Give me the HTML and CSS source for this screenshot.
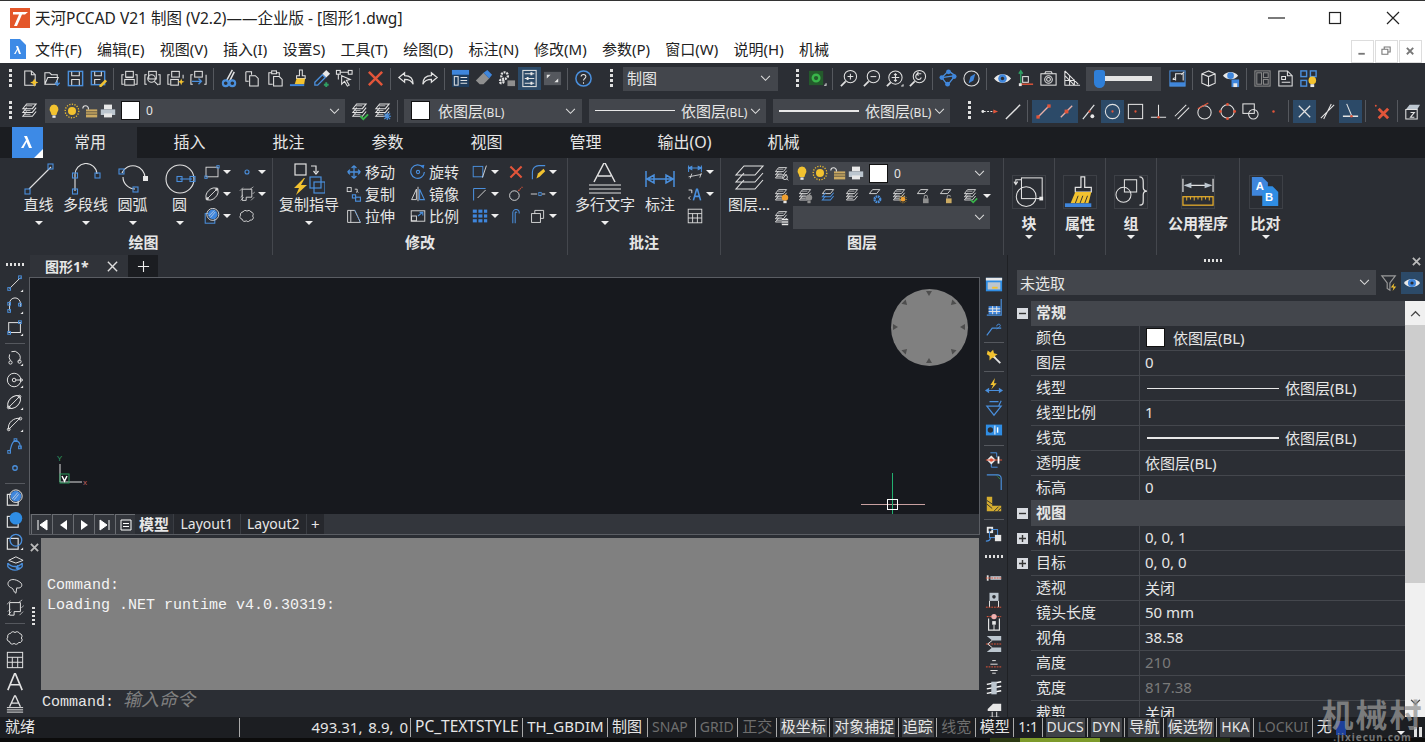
FILE: index.html
```html
<!DOCTYPE html>
<html lang="zh-CN">
<head>
  <meta charset="UTF-8" />
  <meta name="viewport" content="width=device-width, initial-scale=1.0"/>
  <title>天河PCCAD V21 制图</title>
  <link rel="stylesheet" href="styles.css">
</head>
<body>
  <!-- icon sprite -->
  <svg class="sprite" xmlns="http://www.w3.org/2000/svg">
    <symbol id="new" viewBox="0 0 20 20"><path d="M5 2h7l4 4v11H5z"/><path d="M12 2v4h4"/><path class="fy" d="M15 10l1.300 3 3 1.300-3 1.300-1.300 3-1.300-3-3-1.300 3-1.300z"/></symbol>
    <symbol id="open" viewBox="0 0 20 20"><path d="M2 16V4h5l2 2h6v3M2 16l3-7h11l-3 7z"/><path class="b" d="M15 12v5m-2.500-2.500l2.500 2.500 2.500-2.500" stroke-width="1.500"/></symbol>
    <symbol id="save" viewBox="0 0 20 20"><rect class="b" x="2.500" y="2.500" width="15" height="15" stroke-width="1.500"/><path d="M6 3v4h8V3M6 17v-6h8v6"/></symbol>
    <symbol id="saveas" viewBox="0 0 20 20"><rect class="b" x="2.500" y="2.500" width="14" height="14" stroke-width="1.500"/><path d="M6 3v4h7V3M6 16v-5h6"/><path class="fy" d="M11 17l6-6 2 2-6 6h-2z"/></symbol>
    <symbol id="plot" viewBox="0 0 20 20"><path d="M4 6H2v10h2M16 6h2v10h-2"/><rect x="6" y="2.500" width="8" height="6"/><rect x="5" y="11" width="10" height="6"/><path d="M6 9h8"/></symbol>
    <symbol id="plotview" viewBox="0 0 20 20"><path d="M4 6H2v10h2M16 6h2v10h-2"/><rect x="6" y="2.500" width="8" height="8"/><circle cx="9" cy="10" r="4"/><path d="M12 13l4 4"/></symbol>
    <symbol id="plotstar" viewBox="0 0 20 20"><path d="M4 6H2v10h2M18 6v4"/><rect x="6" y="2.500" width="8" height="6"/><rect x="5" y="11" width="8" height="6"/><path class="fy" d="M16 10l1 2.500 2.500 1-2.500 1-1 2.500-1-2.500-2.500-1 2.500-1z"/></symbol>
    <symbol id="plotgo" viewBox="0 0 20 20"><path d="M4 6H2v10h2M18 6v10h-2"/><rect x="6" y="2.500" width="8" height="6"/><path class="b" d="M3 13h10m-3-3l3 3-3 3" stroke-width="1.500"/></symbol>
    <symbol id="cut" viewBox="0 0 20 20"><path d="M13 1L7 12M15 3L10 13" stroke-width="1.600"/><circle class="b" cx="6" cy="15" r="3" stroke-width="2.200"/><circle class="b" cx="13" cy="15" r="3" stroke-width="2.200"/></symbol>
    <symbol id="copy" viewBox="0 0 20 20"><path d="M3 3h6v3M3 3v10h3"/><path d="M7 7h6l3 3v8H7z"/></symbol>
    <symbol id="paste" viewBox="0 0 20 20"><path d="M6 4H3v12h4M11 4h3v3"/><rect x="6" y="2" width="5" height="3"/><path d="M8 8h6l3 3v7H8z"/></symbol>
    <symbol id="brush" viewBox="0 0 20 20"><path d="M11 1h3v6h3v3H8V7h3z"/><path class="fy" d="M8 10h9l-1 6H6z"/><rect class="fb" x="1" y="16" width="15" height="2"/></symbol>
    <symbol id="dropper" viewBox="0 0 20 20"><path class="b" d="M3 14l8-8 3 3-8 8H3z" stroke-width="1.400"/><path class="fw" d="M11 5l4-4 4 4-4 4z"/><path class="g" d="M15 14v5M12.500 16.500h5" stroke-width="2"/></symbol>
    <symbol id="select" viewBox="0 0 20 20"><rect x="1.500" y="1.500" width="4" height="4"/><rect x="14" y="1.500" width="4" height="4"/><path d="M5 3.500h9M3.500 5v6"/><path d="M7 7l9 4-4 1 3 5-2 1-3-5-3 3z"/></symbol>
    <symbol id="x" viewBox="0 0 20 20"><path class="r" d="M3 3l14 14M17 3L3 17" stroke-width="2.600"/></symbol>
    <symbol id="undo" viewBox="0 0 20 20"><path d="M8 4L2 9l6 5v-3c4 0 7 1 9 5 0-6-3-9-9-9z" stroke-width="1.300"/></symbol>
    <symbol id="redo" viewBox="0 0 20 20"><path d="M12 4l6 5-6 5v-3c-4 0-7 1-9 5 0-6 3-9 9-9z" stroke-width="1.300"/></symbol>
    <symbol id="palette" viewBox="0 0 20 20"><rect class="fbd" x="1" y="1" width="18" height="18"/><rect class="fb" x="1" y="1" width="18" height="5"/><rect x="3.500" y="8" width="4" height="9"/><path d="M10 9h7M10 12h7M10 15h7"/></symbol>
    <symbol id="eraser" viewBox="0 0 20 20"><path class="fgr" d="M2 12l8-8 6 6-6 6H6z"/><path class="fb" d="M10 4l4-3 5 5-3 4z"/></symbol>
    <symbol id="gears" viewBox="0 0 20 20"><circle class="thick" cx="8" cy="7" r="3.500" stroke-dasharray="2 1"/><circle class="thick" cx="5" cy="13" r="2" stroke-dasharray="2 1"/><rect class="fgr" x="11" y="12" width="8" height="6"/></symbol>
    <symbol id="sliders" viewBox="0 0 20 20"><rect x="3" y="1.500" width="14" height="17"/><path d="M5 5h10M5 10h10M5 15h10"/><path class="fw" d="M11 3.500h2v3h-2zM7 8.500h2v3H7zM11 13.500h2v3h-2z"/></symbol>
    <symbol id="expand" viewBox="0 0 20 20"><rect class="fgd" x="1" y="3" width="18" height="14"/><path class="fw" d="M4 6h4l-4 4zM16 14h-4l4-4z"/></symbol>
    <symbol id="help" viewBox="0 0 20 20"><circle class="b" cx="10" cy="10" r="8" stroke-width="1.600"/><path d="M7.500 8c0-3 5-3 5 0 0 2-2.500 2-2.500 4M10 14v1.500"/></symbol>
    <symbol id="regen" viewBox="0 0 20 20"><rect class="fgn" x="1" y="2" width="15" height="15"/><circle class="g2" cx="8.500" cy="9.500" r="3.500" stroke-width="2.500"/><path d="M17 17h2v-2"/></symbol>
    <symbol id="zin" viewBox="0 0 20 20"><circle cx="12" cy="8" r="6.500"/><path d="M7 13l-5 5" stroke-width="1.800"/><path d="M12 5v6M9 8h6"/></symbol>
    <symbol id="zout" viewBox="0 0 20 20"><circle cx="12" cy="8" r="6.500"/><path d="M7 13l-5 5" stroke-width="1.800"/><path d="M9 8h6"/></symbol>
    <symbol id="zext" viewBox="0 0 20 20"><circle cx="11" cy="9" r="7"/><path d="M6 14l-4 4" stroke-width="1.800"/><path d="M11 5v8M7 9h8M9.500 6.500l1.500-1.500 1.500 1.500M9.500 11.500l1.500 1.500 1.500-1.500"/><path d="M17 18h2v-2"/></symbol>
    <symbol id="zprev" viewBox="0 0 20 20"><circle cx="12" cy="8" r="6.500"/><path d="M7 13l-5 5" stroke-width="1.800"/><path d="M14 5h-3a3 3 0 1 0 3 4M11 3l-1.500 2 1.500 2"/></symbol>
    <symbol id="orbit" viewBox="0 0 20 20"><path class="b" d="M10 2L3 9l6 8M10 2l7 5-8 10M3 9l14-2" stroke-width="1.400"/><circle class="fb" cx="10" cy="3" r="2.500"/><circle class="fb" cx="3" cy="9" r="2.500"/><circle class="fb" cx="16" cy="8" r="2.500"/><circle class="fb" cx="9" cy="16" r="2.500"/></symbol>
    <symbol id="compass" viewBox="0 0 20 20"><circle cx="10" cy="10" r="8"/><path class="fb" d="M14 5l-2 7-5 3 2-7z"/></symbol>
    <symbol id="eye" viewBox="0 0 20 20"><path class="fw" d="M1 10c4-6 14-6 18 0-4 6-14 6-18 0z"/><circle class="fb" cx="10" cy="10" r="4.500"/><circle class="fd" cx="10" cy="10" r="1.800"/></symbol>
    <symbol id="axes" viewBox="0 0 20 20"><path class="g" d="M5 17V3M3 5l2-3 2 3" stroke-width="1.500"/><path class="r" d="M5 16h13" stroke-width="1.500"/><rect x="7" y="8" width="6" height="6"/><rect class="fw" x="3" y="15" width="3" height="3"/></symbol>
    <symbol id="camera" viewBox="0 0 20 20"><rect x="2" y="5" width="16" height="12"/><path d="M6 5l1-2h6l1 2"/><circle cx="10" cy="11" r="4"/><circle cx="10" cy="11" r="2"/></symbol>
    <symbol id="persp" viewBox="0 0 20 20"><path d="M3 2v15h16M3 2l14 14M3 7l10 10M8 7v10M13 11v6M3 12h10"/></symbol>
    <symbol id="vport" viewBox="0 0 20 20"><rect class="fb" x="2" y="14" width="16" height="4"/><rect class="b" x="2" y="2" width="16" height="16"/><path d="M8 12V5h8v7"/><path d="M5 11h3M5 11l2-2M17 3l-3 3"/></symbol>
    <symbol id="cube" viewBox="0 0 20 20"><path d="M10 2L3 5v10l7 3 7-3V5zM3 5l7 3 7-3M10 8v10"/></symbol>
    <symbol id="eyesave" viewBox="0 0 20 20"><path class="fw" d="M1 7c4-5 12-5 16 0-4 5-12 5-16 0z"/><circle class="fb" cx="9" cy="7" r="3.500"/><rect class="fb" x="10" y="11" width="8" height="8"/><rect class="fw" x="12" y="15" width="4" height="4"/></symbol>
    <symbol id="lay1" viewBox="0 0 20 20"><g class="dim"><rect x="2" y="2" width="16" height="16"/><rect x="4" y="4" width="5" height="12"/><rect x="11" y="4" width="5" height="5"/><rect x="11" y="11" width="5" height="5"/></g></symbol>
    <symbol id="lay2" viewBox="0 0 20 20"><path d="M3 2h9l5 5v11H3z"/><path d="M12 2v5h5M6 14h9M6 8h4v3H6z"/></symbol>
    <symbol id="lay3" viewBox="0 0 20 20"><g class="b"><rect x="2" y="2" width="6" height="6" stroke-width="1.500"/><rect x="12" y="2" width="6" height="6" stroke-width="1.500"/><rect x="2" y="12" width="6" height="6" stroke-width="1.500"/></g><circle class="fy" cx="14" cy="12" r="4"/><rect class="fw" x="12" y="16" width="4" height="3"/></symbol>
    <symbol id="lay" viewBox="0 0 20 20"><path d="M7 2h10l-4 5H3zM7 6l-4 5h10l4-5M7 10l-4 5h10l4-5" stroke-width="1.100"/><path d="M6 4h7M5 9h6M5 13h6" stroke-width=".8"/></symbol>
    <symbol id="layfind" viewBox="0 0 20 20"><use href="#lay"/><circle cx="15" cy="14" r="3"/><path d="M17 16l2 2"/></symbol>
    <symbol id="layok" viewBox="0 0 20 20"><use href="#lay"/><path class="g2" d="M11 15l3 3 5-5" stroke-width="2"/></symbol>
    <symbol id="laystar" viewBox="0 0 20 20"><use href="#lay"/><path class="b" d="M15 11v8M11 15h8M12 12l6 6M18 12l-6 6" stroke-width="1.300"/></symbol>
    <symbol id="laybulb" viewBox="0 0 20 20"><use href="#lay"/><circle class="fo" cx="15" cy="12" r="4"/><rect class="fw" x="13" y="16" width="4" height="3"/></symbol>
    <symbol id="laygrey" viewBox="0 0 20 20"><use href="#lay"/><circle class="fgr" cx="15" cy="12" r="4"/><rect class="fgr" x="13" y="16" width="4" height="3"/></symbol>
    <symbol id="layblue" viewBox="0 0 20 20"><path d="M7 2h10l-4 5H3z"/><path class="b" d="M7 6l-4 5h10l4-5M7 10l-4 5h10l4-5" stroke-width="1.300"/></symbol>
    <symbol id="laygear" viewBox="0 0 20 20"><path d="M7 2h9l-4 5H3z"/><circle class="b" cx="13" cy="14" r="3.500" stroke-width="3" stroke-dasharray="2 .8"/></symbol>
    <symbol id="laysun" viewBox="0 0 20 20"><use href="#lay"/><circle class="fo" cx="15" cy="14" r="3"/><circle class="o" cx="15" cy="14" r="4.500" stroke-dasharray="1 1.500"/></symbol>
    <symbol id="laylock" viewBox="0 0 20 20"><path d="M7 2h9l-4 5H3z"/><rect class="fgr" x="10" y="13" width="7" height="6"/><path class="gr" d="M11.500 13v-2a2 2 0 0 1 4 0v2" stroke-width="1.300"/></symbol>
    <symbol id="layopen" viewBox="0 0 20 20"><path d="M7 2h9l-4 5H3z"/><rect class="ftan" x="10" y="13" width="7" height="6"/><path class="gr" d="M11.500 13v-2a2 2 0 0 1 4 0" stroke-width="1.300"/></symbol>
    <symbol id="laylist" viewBox="0 0 20 20"><use href="#lay"/><rect class="fw" x="11" y="11" width="8" height="8"/><path class="bd" d="M11 13.500h8M11 16.500h8" stroke-width="1.200"/></symbol>
    <symbol id="bulb" viewBox="0 0 20 20"><path class="fy" d="M10 2a6 6 0 0 1 4 10l-1 3H7l-1-3a6 6 0 0 1 4-10z"/><rect class="fw" x="8" y="15.500" width="4" height="3"/></symbol>
    <symbol id="sun" viewBox="0 0 20 20"><circle class="fy" cx="10" cy="10" r="5"/><circle class="y" cx="10" cy="10" r="8.500" stroke-dasharray="1.500 1.800" stroke-width="1.600"/></symbol>
    <symbol id="lockopen" viewBox="0 0 20 20"><rect class="ftan" x="5" y="8" width="14" height="10"/><path class="bd" d="M5 11h14M5 14h14" stroke-width=".8"/><path d="M1 7a3.500 3.500 0 0 1 7 0v1" stroke-width="1.400"/></symbol>
    <symbol id="printer" viewBox="0 0 20 20"><rect class="fw" x="5" y="2" width="10" height="6"/><rect class="fgl" x="1" y="8" width="18" height="7"/><rect class="fw" x="5" y="13" width="10" height="5"/></symbol>
    <symbol id="dasharrow" viewBox="0 0 20 20"><circle class="fw" cx="3" cy="10" r="1.500"/><path d="M4 10h11" stroke-dasharray="2 1.500"/><path class="fr" d="M14 8l5 2-5 2z"/></symbol>
    <symbol id="line" viewBox="0 0 20 20"><path d="M3 18L18 3" stroke-width="1.500"/></symbol>
    <symbol id="snapend" viewBox="0 0 20 20"><path class="lg" d="M4 16L16 4" stroke-width="1.400"/><rect class="fr" x="14" y="2.500" width="3.500" height="3.500"/><rect class="fr" x="2.500" y="14" width="3.500" height="3.500"/></symbol>
    <symbol id="snapmid" viewBox="0 0 20 20"><path class="lg" d="M4 16L16 4" stroke-width="1.400"/><rect class="fr" x="8" y="8" width="4" height="4"/></symbol>
    <symbol id="snapint" viewBox="0 0 20 20"><path d="M3 18L15 3" stroke-width="1.300"/><circle class="fw" cx="13" cy="15" r="2"/><circle class="fr" cx="10" cy="10" r="1.200"/></symbol>
    <symbol id="snapcen" viewBox="0 0 20 20"><circle cx="10" cy="10" r="7.500"/><circle class="fr" cx="10" cy="10" r="1.200"/></symbol>
    <symbol id="snapnode" viewBox="0 0 20 20"><rect x="2.500" y="2.500" width="15" height="15"/><circle class="fr" cx="10" cy="10" r="1.200"/></symbol>
    <symbol id="snapperp" viewBox="0 0 20 20"><path d="M10 3v13M2 16h16"/><circle class="fr" cx="10" cy="16" r="1.300"/></symbol>
    <symbol id="snappar" viewBox="0 0 20 20"><path d="M3 15L15 3M6 18L18 6"/></symbol>
    <symbol id="snaptan" viewBox="0 0 20 20"><circle cx="10" cy="11" r="7"/><path class="r" d="M3 7L14 1" stroke-width="1.200"/></symbol>
    <symbol id="snapquad" viewBox="0 0 20 20"><circle cx="10" cy="10" r="7"/><g class="fr"><circle cx="10" cy="2.500" r="1.500"/><circle cx="10" cy="17.500" r="1.500"/><circle cx="2.500" cy="10" r="1.500"/><circle cx="17.500" cy="10" r="1.500"/></g></symbol>
    <symbol id="snapins" viewBox="0 0 20 20"><rect x="2" y="2" width="12" height="10"/><circle cx="13" cy="13" r="5"/></symbol>
    <symbol id="dot" viewBox="0 0 20 20"><circle class="fr" cx="10" cy="10" r="1.300"/></symbol>
    <symbol id="cross" viewBox="0 0 20 20"><path d="M4 4l12 12M16 4L4 16" stroke-width="1.300"/></symbol>
    <symbol id="snapnear" viewBox="0 0 20 20"><path d="M3 17L17 3M14 2l-8 16"/></symbol>
    <symbol id="snapdyn" viewBox="0 0 20 20"><path d="M6 2l5 12"/><path d="M2 15h16" stroke-width="1.600"/><circle class="fr" cx="11" cy="15" r="1.300"/></symbol>
    <symbol id="delx" viewBox="0 0 20 20"><path class="r" d="M7 7l10 10M17 7L7 17" stroke-width="3"/><circle class="fr" cx="4" cy="4" r="1"/></symbol>
    <symbol id="solid" viewBox="0 0 20 20"><path class="fgl" d="M4 8l4-5h11l-3 5z"/><path d="M4 8h12v10H4z"/><path d="M9 11h4l-4 5h4" stroke-width="1.200"/></symbol>

    <symbol id="bline" viewBox="0 0 32 32"><path d="M6 26L28 4"/><rect class="b" x="25" y="1" width="5" height="5"/><rect class="b" x="2" y="26" width="5" height="5"/></symbol>
    <symbol id="bpoly" viewBox="0 0 32 32"><path d="M5 28V12a11 11 0 0 1 22-1"/><rect class="b" x="2.500" y="10" width="5" height="5"/><rect class="b" x="2.500" y="26" width="5" height="5"/><rect class="b" x="25" y="10" width="5" height="5"/></symbol>
    <symbol id="barc" viewBox="0 0 32 32"><path d="M5 10a12 12 0 0 1 23 5M6 14a12 12 0 0 0 12 12"/><rect class="b" x="2" y="6" width="5" height="5"/><rect class="b" x="16" y="24" width="5" height="5"/><rect class="fw" x="26" y="13" width="5" height="5"/></symbol>
    <symbol id="bcircle" viewBox="0 0 32 32"><circle cx="16" cy="16" r="14"/><path class="b" d="M16 16h12"/><rect class="b" x="13" y="13.500" width="5" height="5"/><rect class="b" x="26" y="13.500" width="5" height="5"/></symbol>
    <symbol id="rect" viewBox="0 0 20 20"><rect x="2.500" y="4" width="15" height="12"/><rect class="b" x="16" y="2" width="3" height="3"/><rect class="b" x="1" y="15" width="3" height="3"/></symbol>
    <symbol id="point" viewBox="0 0 20 20"><circle class="b" cx="10" cy="10" r="2.500" stroke-width="1.400"/></symbol>
    <symbol id="ellipse" viewBox="0 0 20 20"><ellipse cx="10" cy="10" rx="9" ry="6" transform="rotate(-45 10 10)"/><path d="M3 17L17 3"/><circle cx="16" cy="4" r="1.500"/><circle cx="4" cy="16" r="1.500"/></symbol>
    <symbol id="bound" viewBox="0 0 20 20"><path d="M4 4h12v10H9v4H4z"/><path d="M2 18l4-4M2 14l3-3M15 18l4-4M17 10l3-3M1 6l4-4M14 4l4-3" stroke-width=".8"/></symbol>
    <symbol id="hatch" viewBox="0 0 20 20"><rect class="b" x="1.500" y="7" width="12" height="12" stroke-width="1.300"/><circle class="fb" cx="11" cy="8" r="6"/><circle cx="11" cy="8" r="7.500"/><path d="M6 10l7-7M8 12l6-7" stroke-width=".8"/></symbol>
    <symbol id="cloud" viewBox="0 0 20 20"><path d="M5 5a3 3 0 0 1 5-1 3 3 0 0 1 5 1 3 3 0 0 1 2 5 3 3 0 0 1-3 5 3 3 0 0 1-5 1 3 3 0 0 1-5-2 3 3 0 0 1-2-5 3 3 0 0 1 3-4z"/></symbol>
    <symbol id="move" viewBox="0 0 20 20"><path class="b" d="M10 2v16M2 10h16M10 2L7 5M10 2l3 3M10 18l-3-3M10 18l3-3M2 10l3-3M2 10l3 3M18 10l-3-3M18 10l-3 3" stroke-width="1.600"/></symbol>
    <symbol id="scopy" viewBox="0 0 20 20"><rect x="1.500" y="2" width="5" height="5"/><path d="M11 4h3v3M12.500 8l1.500-1 1.500 1"/><rect class="b" x="8" y="11" width="4" height="4" stroke-width="1.400"/><rect class="b" x="12" y="14" width="6" height="5" stroke-width="1.400"/></symbol>
    <symbol id="stretch" viewBox="0 0 20 20"><path d="M2 3v15h16L11 3z"/><path d="M6 3v15" stroke-width="1.100"/><path class="b" d="M11 3l7 15" stroke-dasharray="2 1.500"/></symbol>
    <symbol id="rotate" viewBox="0 0 20 20"><path class="b" d="M16 4a8.500 8.500 0 1 0 2 6" stroke-width="1.500"/><circle class="b" cx="10" cy="10" r="2" stroke-width="1.400"/><path class="fb" d="M13 2l5-1-1 5z"/></symbol>
    <symbol id="mirror" viewBox="0 0 20 20"><path d="M8 4v13H2zM10 1v18" stroke-width="1.100"/><path class="b" d="M12 4v13h6z" stroke-width="1.400"/></symbol>
    <symbol id="scale" viewBox="0 0 20 20"><rect x="1.500" y="3.500" width="17" height="13"/><rect x="2" y="10" width="6" height="6"/><path class="b" d="M10 10l5-4M12 5.500h4v4" stroke-width="1.400"/></symbol>
    <symbol id="offset" viewBox="0 0 20 20"><rect class="b" x="1.500" y="3" width="12" height="13" stroke-width="1.200"/><path d="M13 17L18 2"/></symbol>
    <symbol id="extend" viewBox="0 0 20 20"><path class="b" d="M2 3v15M2 3h15" stroke-width="1.300"/><path d="M7 15L17 5"/></symbol>
    <symbol id="array" viewBox="0 0 20 20"><g class="fb"><rect x="1" y="2" width="5" height="4"/><rect x="8" y="2" width="5" height="4"/><rect x="15" y="2" width="4" height="4"/><rect x="1" y="8" width="5" height="4"/><rect x="8" y="8" width="5" height="4"/><rect x="15" y="8" width="4" height="4"/><rect x="1" y="14" width="5" height="4"/><rect x="8" y="14" width="5" height="4"/><rect x="15" y="14" width="4" height="4"/></g></symbol>
    <symbol id="fillet" viewBox="0 0 20 20"><path class="b" d="M3 19V10a8 8 0 0 1 8-8h8" stroke-width="1.400"/><path class="fy" d="M8 18l2-6 7-6 2 3-7 7z"/></symbol>
    <symbol id="break" viewBox="0 0 20 20"><circle cx="8" cy="12" r="6"/><path class="r" d="M13 6l3-3M17 2l1-1" stroke-width="1.500" stroke-dasharray="2 1"/></symbol>
    <symbol id="join" viewBox="0 0 20 20"><path d="M1 10h8"/><rect class="b" x="11" y="8" width="3" height="4"/><path d="M15 10h4"/></symbol>
    <symbol id="bend" viewBox="0 0 20 20"><path class="b" d="M6 19V6a4 4 0 0 1 8 0v1M9 19V6a1 1 0 0 1 2 0" stroke-width="1.300"/></symbol>
    <symbol id="stack" viewBox="0 0 20 20"><rect x="2" y="7" width="11" height="11"/><path d="M6 7V3h11v10h-4"/></symbol>
    <symbol id="btext" viewBox="0 0 32 32"><path d="M5 19L15 0h1l10 19M9 13h13" stroke-width="1.500"/><path d="M0 22h32M0 26h32M0 30h32"/></symbol>
    <symbol id="bdim" viewBox="0 0 32 32"><path class="b" d="M2 8v16M30 8v16M3 16h26M3 16l7-4v8zM29 16l-7-4v8z" stroke-width="1.500"/></symbol>
    <symbol id="dims" viewBox="0 0 20 20"><path class="b" d="M2 2v8M18 2v8M2 5h16M2 5l4-2v4zM18 5l-4-2v4z" stroke-width="1.300"/><path d="M4 18l2-6M16 17l2-6M2 16l16-3" stroke-width="1"/></symbol>
    <symbol id="mtext" viewBox="0 0 20 20"><path d="M2 5h4v4M4 13l-2 2 2 2" stroke-width="1.200"/><path class="b" d="M8 18l4-14h1l4 14M10 13h6" stroke-width="2"/></symbol>
    <symbol id="table" viewBox="0 0 20 20"><rect x="1.500" y="1.500" width="17" height="17"/><path d="M1.500 7h17M1.500 12.500h17M7 7v11.500M13 7v11.500"/></symbol>
    <symbol id="blay" viewBox="0 0 32 32"><path d="M11 3h19l-8 9H3zM11 10l-8 9h19l8-9M11 17l-8 9h19l8-9" stroke-width="1.100"/></symbol>
    <symbol id="bguide" viewBox="0 0 32 32"><rect x="2" y="1" width="11" height="11" stroke-width="1.200"/><path d="M18 3h5v6M20.500 8l2.500 3 2.500-3" stroke-width="1.200"/><rect class="b" x="17" y="14" width="11" height="11" stroke-width="1.200"/><rect class="b" x="21" y="19" width="11" height="11" stroke-width="1.200"/><path class="fy" d="M11 15L1 25h5l-3 7 11-10H8l4-7z"/></symbol>
    <symbol id="bblock" viewBox="0 0 34 34"><rect x="9" y="2" width="22" height="22"/><circle cx="14" cy="22" r="10.500"/><path d="M9 4H3v4M1 6l2 3 2-3"/><rect class="fw" x="28" y="22" width="4" height="4"/></symbol>
    <symbol id="bbrush" viewBox="0 0 34 34"><path d="M18 1h4v11h7v5H12v-5h6z" stroke-width="1.300"/><path class="fy" d="M12 17h17l-3 12H7z"/><path class="bd" d="M15 21l-3 8M20 21l-3 8M25 21l-3 8" stroke-width="1"/><rect class="fb" x="1" y="29" width="28" height="4"/></symbol>
    <symbol id="bgroup" viewBox="0 0 34 34"><rect x="10" y="4" width="13" height="13"/><circle cx="9" cy="20" r="8"/><path d="M26 1c4 0 4 3 4 6v5c0 3 2 4 4 4-2 0-4 1-4 4v6c0 3 0 5-4 5" stroke-width="1.300"/></symbol>
    <symbol id="bruler" viewBox="0 0 34 34"><path d="M1 3v14M33 3v14M3 10h28" stroke-width="1.300"/><path class="fgl" d="M2 10l8-3v6zM32 10l-8-3v6z"/><rect class="o" x="1" y="22" width="32" height="9" stroke-width="1.400"/><path class="o" d="M5 22v4M9 22v3M13 22v4M17 22v3M21 22v4M25 22v3M29 22v4"/></symbol>

    <symbol id="vrect" viewBox="0 0 20 20"><rect x="3" y="4" width="13" height="11"/><rect class="b" x="14" y="2" width="3" height="3"/><rect class="b" x="2" y="14" width="3" height="3"/><path class="fw" d="M19 16v3h-3z"/></symbol>
    <symbol id="vline" viewBox="0 0 20 20"><path d="M4 15L16 3"/><rect class="b" x="14" y="1" width="3" height="3"/><rect class="b" x="2" y="14" width="3" height="3"/><path class="fw" d="M19 16v3h-3z"/></symbol>
    <symbol id="vpoly" viewBox="0 0 20 20"><path d="M4 15V7a6 6 0 0 1 12 0v4"/><rect class="b" x="2" y="6" width="3" height="3"/><rect class="b" x="2" y="14" width="3" height="3"/><rect class="b" x="14" y="7" width="3" height="3"/><path class="fw" d="M19 16v3h-3z"/></symbol>
    <symbol id="varc" viewBox="0 0 20 20"><path d="M6 3a7 7 0 0 1 8 2 7 7 0 0 1 0 9M4 6a7 7 0 0 0 1 7"/><circle cx="5" cy="15" r="1.800"/><circle cx="15" cy="14" r="1.800"/><path class="fw" d="M19 16v3h-3z"/></symbol>
    <symbol id="vcirc" viewBox="0 0 20 20"><circle cx="9" cy="10" r="7.500"/><circle cx="9" cy="10" r="2"/><path d="M11 10h6"/><circle cx="17" cy="10" r="1.300"/><path class="fw" d="M19 16v3h-3z"/></symbol>
    <symbol id="vell" viewBox="0 0 20 20"><ellipse cx="9" cy="10" rx="8.500" ry="5.500" transform="rotate(-45 9 10)"/><path d="M3 16L15 4"/><circle cx="15" cy="4" r="1.500"/><circle cx="3" cy="16" r="1.500"/><path class="fw" d="M19 16v3h-3z"/></symbol>
    <symbol id="vell2" viewBox="0 0 20 20"><path d="M3 16C1 9 9 2 16 4M3 16L15 4"/><circle cx="16" cy="4" r="1.500"/><circle cx="3" cy="16" r="1.500"/><path class="fw" d="M19 16v3h-3z"/></symbol>
    <symbol id="vspl" viewBox="0 0 20 20"><path class="b" d="M4 16c2-3 1-9 6-12 6 0 6 5 6 8" stroke-width="1.300"/><rect class="b" x="2" y="15" width="3" height="3"/><rect class="b" x="9" y="2" width="3" height="3"/><rect class="b" x="14" y="10" width="3" height="3"/></symbol>
    <symbol id="vhatch" viewBox="0 0 20 20"><rect x="1.500" y="6" width="12" height="12" stroke-width="1.300"/><circle class="fb" cx="11" cy="8" r="6"/><circle cx="11" cy="8" r="7"/><path d="M7 11l6-7M9 12l5-6" stroke-width=".8"/></symbol>
    <symbol id="vgrad" viewBox="0 0 20 20"><rect x="1.500" y="6" width="12" height="12" stroke-width="1.300"/><circle class="fbl" cx="11" cy="8" r="7"/></symbol>
    <symbol id="vbound" viewBox="0 0 20 20"><rect x="1.500" y="6" width="12" height="12" stroke-width="1.300"/><circle class="b" cx="11" cy="8" r="6.500" stroke-width="1.400"/><path class="fw" d="M19 16v3h-3z"/></symbol>
    <symbol id="vwipe" viewBox="0 0 20 20"><path d="M3 6l8-4 8 4-8 3z"/><path class="b" d="M2 9c4 5 12 5 16 0M2 13c4 5 12 5 16 0M2 9v4M18 9v4M13 11v5M11 14l2 2 2-2" stroke-width="1.500"/></symbol>
    <symbol id="vblob" viewBox="0 0 20 20"><path d="M3 5c3-4 10-2 14 2 2 4-2 6-5 5l-1 6c-3-1-2-5-5-6S1 8 3 5z"/></symbol>
    <symbol id="vtexta" viewBox="0 0 20 20"><path d="M2 19L9.500 1h1L18 19M5 13h10" stroke-width="1.800"/></symbol>
    <symbol id="vtextb" viewBox="0 0 20 20"><path d="M4 13L9.500 1h1L16 13M6 9h8" stroke-width="1.500"/><path d="M1 14h18M1 16.500h18M1 19h18"/></symbol>

    <symbol id="r1" viewBox="0 0 20 20"><rect class="fbl" x="1" y="2" width="18" height="15"/><rect class="fw" x="1" y="2" width="18" height="3"/><rect class="fgl" x="3" y="7" width="14" height="8"/><path class="fy" d="M8 12h6v2H8z"/></symbol>
    <symbol id="r2" viewBox="0 0 20 20"><path class="b" d="M18 1v18H2" stroke-width="1.300"/><rect class="fb" x="4" y="9" width="13" height="9"/><path d="M4 12h13M4 15h13M8.500 9v9M13 9v9"/></symbol>
    <symbol id="r3" viewBox="0 0 20 20"><path class="b" d="M2 17l6-8h10M8 9l10 0" stroke-width="1.300"/><path class="b" d="M13 7c0-3 4-3 4-1 0 1-1 2-4 4" stroke-width="1"/></symbol>
    <symbol id="r4" viewBox="0 0 20 20"><path class="fy" d="M3 4l3 2 3-3 1 4 4 1-3 2 2 3-5-1-3 3V10L2 8z"/><path d="M10 11l7 7" stroke-width="2"/></symbol>
    <symbol id="r5" viewBox="0 0 20 20"><path class="fy" d="M11 1L6 9h3l-2 5 6-7h-3z"/><path class="b" d="M1 15h18M1 15l3-2v4zM19 15l-3-2v4z" stroke-width="1.200"/></symbol>
    <symbol id="r6" viewBox="0 0 20 20"><path class="b" d="M2 8h16l-8 10zM5 3h10M18 2l-3 6" stroke-width="1.300"/></symbol>
    <symbol id="r7" viewBox="0 0 20 20"><rect class="fbl" x="1" y="4" width="18" height="12"/><circle class="fd" cx="6" cy="10" r="3"/><path class="wht" d="M11 5v10"/><path class="wht" d="M14 7v6" stroke-width="1.600"/></symbol>
    <symbol id="r8" viewBox="0 0 20 20"><path class="b" d="M6 2h7v5M14 18H7v-4" stroke-width="1.100"/><path class="fw" d="M2 10l5-5 5 5-5 5z"/><circle class="fr" cx="7" cy="10" r="2"/><path class="r" d="M1 10h18"/><path class="wht" d="M15 6v8" stroke-width="2"/></symbol>
    <symbol id="r9" viewBox="0 0 20 20"><path class="b" d="M2 2h12a4 4 0 0 1 4 4v13" stroke-width="1.300"/><path class="g2" d="M13 3l4 4" stroke-dasharray="1 1"/></symbol>
    <symbol id="r10" viewBox="0 0 20 20"><path class="fy" d="M2 2h6v10h10v6H2z" opacity=".85"/><path class="bd" d="M2 6l6 4M2 10l6 5M10 18l5-5M14 18l4-4" stroke-width="1"/></symbol>
    <symbol id="r11" viewBox="0 0 20 20"><rect class="fw" x="2" y="2" width="7" height="7"/><rect class="b" x="5" y="5" width="9" height="9"/><rect class="fw" x="11" y="11" width="7" height="7"/><path class="b" d="M1 18c3 0 5-1 5-4" stroke-width="1.300"/><path class="fd" d="M4 4h3v3H4z"/></symbol>
    <symbol id="r12" viewBox="0 0 20 20"><path d="M3 7v6" stroke-width="2"/><rect class="fgl" x="6" y="8" width="12" height="4"/><path class="r" d="M1 10h18" stroke-dasharray="2 1"/></symbol>
    <symbol id="r13" viewBox="0 0 20 20"><rect class="fgl" x="5" y="2" width="10" height="9"/><circle class="fd" cx="10" cy="6.500" r="2"/><path d="M5 11v7M15 11v7"/><path class="r" d="M1 18h18" stroke-dasharray="2 1"/></symbol>
    <symbol id="r14" viewBox="0 0 20 20"><path class="r" d="M2 4h16" stroke-dasharray="2 1"/><circle class="fp" cx="10" cy="4" r="3"/><path d="M4 6v13h12V6" stroke-width="1.300"/><rect class="fw" x="8" y="9" width="4" height="4"/><path d="M10 13v6"/></symbol>
    <symbol id="r15" viewBox="0 0 20 20"><path class="fgl" d="M2 1l16 0v18H2l6-5h10V6H8z"/><path class="r" d="M1 10h18" stroke-dasharray="2 1"/><path d="M8 6l-5 4 5 4"/></symbol>
    <symbol id="r16" viewBox="0 0 20 20"><path d="M8 4h4M6 8h8M6 15h8M8 18h4"/><path class="r" d="M1 11h18" stroke-dasharray="2 1"/></symbol>
    <symbol id="r17" viewBox="0 0 20 20"><path class="wht" d="M2 6l16-3M2 11l16-3M2 16l16-3" stroke-width="1.600"/><rect class="fgl" x="7" y="3" width="6" height="14"/></symbol>
    <symbol id="r18" viewBox="0 0 20 20"><path class="fw" d="M3 9l6-6h9v8H3z"/><path d="M8 12v6M13 12v6M5 18h11"/></symbol>
    <symbol id="filter" viewBox="0 0 20 20"><path class="gr" d="M2 2h15l-6 8v8l-3-2v-6z" stroke-width="1.300"/><path class="fy" d="M16 10l-4 5h3l-1 4 4-5h-3z"/></symbol>
  </svg>

  <header class="titlebar">
    <svg class="app-logo" viewBox="0 0 20 20"><rect width="20" height="20" fill="#e4572a"/><path d="M3 4h15l-3 2.500H12L7 18H4l5-11.500H3z" fill="#fff"/></svg>
    <div class="title">天河PCCAD V21 制图 (V2.2)——企业版 - [图形1.dwg]</div>
    <div class="winctl">
      <svg viewBox="0 0 58 24"><path d="M20 12h17" stroke="#222" stroke-width="1.200"/></svg>
      <svg viewBox="0 0 58 24"><rect x="23.500" y="6.500" width="11" height="11" fill="none" stroke="#222" stroke-width="1.200"/></svg>
      <svg viewBox="0 0 58 24"><path d="M23 6l12 12M35 6L23 18" stroke="#222" stroke-width="1.200"/></svg>
    </div>
  </header>

  <nav class="menubar">
    <svg class="doc-logo" viewBox="0 0 16 20"><path d="M0 0h10l6 6v14H0z" fill="#3d8ae6"/><path d="M4 15l3-5-1-3h2l3 8H9L7.500 11 5.500 15z" fill="#fff"/></svg>
    <span>文件(F)</span><span>编辑(E)</span><span>视图(V)</span><span>插入(I)</span><span>设置S)</span><span>工具(T)</span><span>绘图(D)</span><span>标注(N)</span><span>修改(M)</span><span>参数(P)</span><span>窗口(W)</span><span>说明(H)</span><span>机械</span>
    <div class="mdi">
      <svg viewBox="0 0 23 23"><path d="M7 14h7" stroke="#777" stroke-width="2"/></svg>
      <svg viewBox="0 0 23 23"><path d="M9 9V6.500h6.500V12H13M6.500 9h6.500v5.500H6.500z" fill="none" stroke="#777" stroke-width="1.200"/></svg>
      <svg viewBox="0 0 23 23"><path d="M7.500 7.500l7 7M14.500 7.500l-7 7" stroke="#777" stroke-width="2"/></svg>
    </div>
  </nav>

  <div class="tb tb-one">
    <i class="grip"></i>
    <svg class="ico"><use href="#new"/></svg><svg class="ico"><use href="#open"/></svg><svg class="ico"><use href="#save"/></svg><svg class="ico"><use href="#saveas"/></svg>
    <i class="sep"></i>
    <svg class="ico"><use href="#plot"/></svg><svg class="ico"><use href="#plotview"/></svg><svg class="ico"><use href="#plotstar"/></svg><svg class="ico"><use href="#plotgo"/></svg>
    <i class="sep"></i>
    <svg class="ico"><use href="#cut"/></svg><svg class="ico"><use href="#copy"/></svg><svg class="ico"><use href="#paste"/></svg><svg class="ico"><use href="#brush"/></svg><svg class="ico"><use href="#dropper"/></svg><svg class="ico"><use href="#select"/></svg>
    <i class="sep"></i>
    <svg class="ico"><use href="#x"/></svg>
    <i class="sep"></i>
    <svg class="ico"><use href="#undo"/></svg><svg class="ico"><use href="#redo"/></svg>
    <i class="sep"></i>
    <svg class="ico"><use href="#palette"/></svg><svg class="ico"><use href="#eraser"/></svg><svg class="ico"><use href="#gears"/></svg><svg class="ico on"><use href="#sliders"/></svg><svg class="ico"><use href="#expand"/></svg>
    <i class="sep"></i>
    <svg class="ico"><use href="#help"/></svg>
    <i class="grip grip-a"></i>
    <div class="combo combo-style">制图<svg class="chev" viewBox="0 0 12 8"><path d="M1 1l5 5 5-5"/></svg></div>
    <i class="grip grip-b"></i>
    <svg class="ico"><use href="#regen"/></svg>
    <i class="sep"></i>
    <svg class="ico"><use href="#zin"/></svg><svg class="ico"><use href="#zout"/></svg><svg class="ico"><use href="#zext"/></svg><svg class="ico"><use href="#zprev"/></svg>
    <i class="sep"></i>
    <svg class="ico"><use href="#orbit"/></svg><svg class="ico"><use href="#compass"/></svg>
    <i class="sep"></i>
    <svg class="ico"><use href="#eye"/></svg><svg class="ico"><use href="#axes"/></svg><svg class="ico"><use href="#camera"/></svg><svg class="ico"><use href="#persp"/></svg>
    <div class="slider"><i class="slider-thumb"></i><i class="slider-track"></i></div>
    <svg class="ico"><use href="#vport"/></svg>
    <i class="sep"></i>
    <svg class="ico"><use href="#cube"/></svg><svg class="ico"><use href="#eyesave"/></svg>
    <i class="sep"></i>
    <svg class="ico"><use href="#lay1"/></svg><svg class="ico"><use href="#lay2"/></svg><svg class="ico"><use href="#lay3"/></svg>
  </div>

  <div class="tb tb-two">
    <i class="grip"></i>
    <svg class="ico"><use href="#lay"/></svg>
    <div class="combo combo-layer">
      <svg class="mini"><use href="#bulb"/></svg><svg class="mini"><use href="#sun"/></svg><svg class="mini"><use href="#lockopen"/></svg><svg class="mini"><use href="#printer"/></svg>
      <i class="swatch"></i><span class="combo-num">0</span>
      <svg class="chev" viewBox="0 0 12 8"><path d="M1 1l5 5 5-5"/></svg>
    </div>
    <svg class="ico"><use href="#layok"/></svg><svg class="ico"><use href="#laystar"/></svg>
    <i class="sep"></i>
    <div class="combo combo-color"><i class="swatch"></i><span>依图层<small>(BL)</small></span><svg class="chev" viewBox="0 0 12 8"><path d="M1 1l5 5 5-5"/></svg></div>
    <div class="combo combo-line"><i class="ln"></i><span>依图层<small>(BL)</small></span><svg class="chev" viewBox="0 0 12 8"><path d="M1 1l5 5 5-5"/></svg></div>
    <div class="combo combo-line"><i class="ln ln-bold"></i><span>依图层<small>(BL)</small></span><svg class="chev" viewBox="0 0 12 8"><path d="M1 1l5 5 5-5"/></svg></div>
    <i class="grip grip-c"></i>
    <svg class="ico"><use href="#dasharrow"/></svg><svg class="ico"><use href="#line"/></svg>
    <i class="sep"></i>
    <svg class="ico on"><use href="#snapend"/></svg><svg class="ico on"><use href="#snapmid"/></svg><svg class="ico"><use href="#snapint"/></svg><svg class="ico on"><use href="#snapcen"/></svg><svg class="ico"><use href="#snapnode"/></svg><svg class="ico"><use href="#snapperp"/></svg><svg class="ico"><use href="#snappar"/></svg><svg class="ico"><use href="#snaptan"/></svg><svg class="ico"><use href="#snapquad"/></svg><svg class="ico"><use href="#snapins"/></svg><svg class="ico"><use href="#dot"/></svg>
    <i class="sep"></i>
    <svg class="ico on"><use href="#cross"/></svg><svg class="ico"><use href="#snapnear"/></svg><svg class="ico on"><use href="#snapdyn"/></svg>
    <i class="sep"></i>
    <svg class="ico"><use href="#delx"/></svg>
    <i class="sep sep-last"></i>
    <svg class="ico"><use href="#solid"/></svg>
  </div>

  <div class="rtabs">
    <svg class="rlogo" viewBox="0 0 31 31"><path d="M0 0h31v31H0z" fill="#3d8ae6"/><path d="M31 22v9h-9z" fill="#fff"/><path d="M9 21l5-8-2-4h3l5 12h-3l-2.500-6-3 6z" fill="#fff"/></svg>
    <div class="rtab rtab-on">常用</div>
    <div class="rtab rtab-first">插入</div><div class="rtab">批注</div><div class="rtab">参数</div><div class="rtab">视图</div><div class="rtab">管理</div><div class="rtab">输出(O)</div><div class="rtab">机械</div>
  </div>

  <div class="ribbon">
    <section class="panel p-draw">
      <div class="pbody">
        <div class="big w47"><svg class="bigico"><use href="#bline"/></svg><span>直线</span><i class="caret"></i></div>
        <div class="big w47"><svg class="bigico"><use href="#bpoly"/></svg><span>多段线</span><i class="caret"></i></div>
        <div class="big w47"><svg class="bigico"><use href="#barc"/></svg><span>圆弧</span><i class="caret"></i></div>
        <div class="big w47"><svg class="bigico"><use href="#bcircle"/></svg><span>圆</span><i class="caret"></i></div>
        <div class="smalls">
          <div class="sm sm-caret"><svg class="ico"><use href="#rect"/></svg><i class="caret"></i></div>
          <div class="sm sm-caret"><svg class="ico"><use href="#ellipse"/></svg><i class="caret"></i></div>
          <div class="sm sm-caret"><svg class="ico"><use href="#hatch"/></svg><i class="caret"></i></div>
        </div>
        <div class="smalls">
          <div class="sm sm-caret"><svg class="ico"><use href="#point"/></svg><i class="caret"></i></div>
          <div class="sm sm-caret"><svg class="ico"><use href="#bound"/></svg><i class="caret"></i></div>
          <div class="sm"><svg class="ico"><use href="#cloud"/></svg></div>
        </div>
      </div>
      <h3>绘图</h3>
    </section>

    <section class="panel p-mod">
      <div class="pbody">
        <div class="big w72"><svg class="bigico"><use href="#bguide"/></svg><span>复制指导</span><i class="caret"></i></div>
        <div class="smalls w63">
          <div class="sm"><svg class="ico"><use href="#move"/></svg>移动</div>
          <div class="sm"><svg class="ico"><use href="#scopy"/></svg>复制</div>
          <div class="sm"><svg class="ico"><use href="#stretch"/></svg>拉伸</div>
        </div>
        <div class="smalls w63 col-two">
          <div class="sm"><svg class="ico"><use href="#rotate"/></svg>旋转</div>
          <div class="sm"><svg class="ico"><use href="#mirror"/></svg>镜像</div>
          <div class="sm"><svg class="ico"><use href="#scale"/></svg>比例</div>
        </div>
        <div class="smalls w36">
          <div class="sm sm-caret"><svg class="ico"><use href="#offset"/></svg><i class="caret"></i></div>
          <div class="sm sm-caret"><svg class="ico"><use href="#extend"/></svg><i class="caret"></i></div>
          <div class="sm sm-caret"><svg class="ico"><use href="#array"/></svg><i class="caret"></i></div>
        </div>
        <div class="smalls w22">
          <div class="sm"><svg class="ico"><use href="#x"/></svg></div>
          <div class="sm"><svg class="ico"><use href="#break"/></svg></div>
          <div class="sm"><svg class="ico"><use href="#bend"/></svg></div>
        </div>
        <div class="smalls w36">
          <div class="sm sm-caret"><svg class="ico"><use href="#fillet"/></svg><i class="caret"></i></div>
          <div class="sm sm-caret"><svg class="ico"><use href="#join"/></svg><i class="caret"></i></div>
          <div class="sm sm-caret"><svg class="ico"><use href="#stack"/></svg><i class="caret"></i></div>
        </div>
      </div>
      <h3>修改</h3>
    </section>

    <section class="panel p-note">
      <div class="pbody">
        <div class="big w74"><svg class="bigico"><use href="#btext"/></svg><span>多行文字</span><i class="caret"></i></div>
        <div class="big w36"><svg class="bigico"><use href="#bdim"/></svg><span>标注</span></div>
        <div class="smalls">
          <div class="sm sm-caret"><svg class="ico"><use href="#dims"/></svg><i class="caret"></i></div>
          <div class="sm sm-caret"><svg class="ico"><use href="#mtext"/></svg><i class="caret"></i></div>
          <div class="sm"><svg class="ico"><use href="#table"/></svg></div>
        </div>
      </div>
      <h3>批注</h3>
    </section>

    <section class="panel p-layer">
      <div class="pbody">
        <div class="big w56"><svg class="bigico"><use href="#blay"/></svg><span>图层...</span></div>
        <div class="layer-rows">
          <div class="layer-row">
            <svg class="ico"><use href="#layfind"/></svg>
            <div class="combo combo-rib">
              <svg class="mini"><use href="#bulb"/></svg><svg class="mini"><use href="#sun"/></svg><svg class="mini"><use href="#lockopen"/></svg><svg class="mini"><use href="#printer"/></svg>
              <i class="swatch"></i><span class="combo-num">0</span>
              <svg class="chev" viewBox="0 0 12 8"><path d="M1 1l5 5 5-5"/></svg>
            </div>
          </div>
          <div class="layer-row layer-tools">
            <svg class="ico"><use href="#laybulb"/></svg><svg class="ico"><use href="#laygrey"/></svg><svg class="ico"><use href="#layblue"/></svg><svg class="ico"><use href="#lay"/></svg><svg class="ico"><use href="#laygear"/></svg><svg class="ico"><use href="#laysun"/></svg><svg class="ico"><use href="#laylock"/></svg><svg class="ico"><use href="#layopen"/></svg><svg class="ico"><use href="#layok"/></svg><i class="caret"></i>
          </div>
          <div class="layer-row">
            <svg class="ico"><use href="#laylist"/></svg>
            <div class="combo combo-rib"><svg class="chev" viewBox="0 0 12 8"><path d="M1 1l5 5 5-5"/></svg></div>
          </div>
        </div>
      </div>
      <h3>图层</h3>
    </section>

    <section class="panel tool w51"><svg class="toolico"><use href="#bblock"/></svg><b>块</b><i class="caret"></i></section>
    <section class="panel tool w51"><svg class="toolico"><use href="#bbrush"/></svg><b>属性</b><i class="caret"></i></section>
    <section class="panel tool w51"><svg class="toolico"><use href="#bgroup"/></svg><b>组</b><i class="caret"></i></section>
    <section class="panel tool w83"><svg class="toolico"><use href="#bruler"/></svg><b>公用程序</b><i class="caret"></i></section>
    <section class="panel tool w51 tool-last">
      <svg class="toolico" viewBox="0 0 34 34"><path class="fb" d="M2 1h11l6 6v14H2z"/><path class="fbl" d="M13 11h11l6 6v15H13z"/><text class="icotext" x="6" y="15" font-size="12">A</text><text class="icotext" x="16" y="27" font-size="12">B</text></svg>
      <b>比对</b><i class="caret"></i>
    </section>
  </div>

  <main class="work">
    <aside class="vbar vbar-left">
      <i class="hgrip"></i>
      <svg class="ico"><use href="#vline"/></svg><svg class="ico"><use href="#vpoly"/></svg><svg class="ico"><use href="#vrect"/></svg>
      <i class="vsep"></i>
      <svg class="ico"><use href="#varc"/></svg><svg class="ico"><use href="#vcirc"/></svg><svg class="ico"><use href="#vell"/></svg><svg class="ico"><use href="#vell2"/></svg><svg class="ico"><use href="#vspl"/></svg><svg class="ico"><use href="#point"/></svg>
      <i class="vsep"></i>
      <svg class="ico"><use href="#vhatch"/></svg><svg class="ico"><use href="#vgrad"/></svg><svg class="ico"><use href="#vbound"/></svg><svg class="ico"><use href="#vwipe"/></svg><svg class="ico"><use href="#vblob"/></svg><svg class="ico"><use href="#bound"/></svg>
      <i class="vsep"></i>
      <svg class="ico"><use href="#cloud"/></svg><svg class="ico"><use href="#table"/></svg><svg class="ico"><use href="#vtexta"/></svg><svg class="ico"><use href="#vtextb"/></svg>
    </aside>

    <div class="center">
      <div class="doctabs">
        <div class="doctab"><b>图形1*</b><svg viewBox="0 0 14 14"><path d="M2 2l10 10M12 2L2 12"/></svg></div>
        <div class="docadd"><svg viewBox="0 0 14 14"><path d="M7 1v12M1 7h12"/></svg></div>
      </div>
      <div class="viewframe">
        <div class="canvas">
          <div class="navwheel">
            <i class="tri t1"></i><i class="tri t2"></i><i class="tri t3"></i><i class="tri t4"></i><i class="tri t5"></i><i class="tri t6"></i><i class="tri t7"></i><i class="tri t8"></i>
          </div>
          <svg class="ucs" viewBox="0 0 40 34"><text class="ucs-y" x="3" y="6">Y</text><path d="M6 9v18h22" stroke="#ddd" fill="none"/><rect x="6" y="19" width="9" height="9" fill="none" stroke="#2c9a5c"/><path d="M8 21l2.500 5 2.500-5" fill="none" stroke="#fff" stroke-width="1.500"/><text class="ucs-x" x="29" y="30">x</text></svg>
          <div class="crosshair"><i class="ch-h"></i><i class="ch-v"></i><i class="ch-box"></i></div>
        </div>
        <div class="layouttabs">
          <button class="navbtn"><svg viewBox="0 0 12 14"><path d="M2 2v10M11 2L4 7l7 5z" fill="#fff" stroke="#fff"/></svg></button>
          <button class="navbtn"><svg viewBox="0 0 12 14"><path d="M10 2L3 7l7 5z" fill="#fff"/></svg></button>
          <button class="navbtn"><svg viewBox="0 0 12 14"><path d="M3 2l7 5-7 5z" fill="#fff"/></svg></button>
          <button class="navbtn"><svg viewBox="0 0 12 14"><path d="M10 2v10M1 2l7 5-7 5z" fill="#fff" stroke="#fff"/></svg></button>
          <button class="navbtn"><svg viewBox="0 0 12 14"><path d="M1 2h10v10H1zM3 5.500h6M3 8.500h6" fill="none" stroke="#fff"/></svg></button>
          <span class="ltab ltab-on">模型</span><span class="ltab">Layout1</span><span class="ltab">Layout2</span><span class="ltab ltab-add">+</span>
        </div>
      </div>
      <div class="cmdwrap">
        <div class="cmdside"><svg class="cmdx" viewBox="0 0 10 10"><path d="M1 1l8 8M9 1L1 9"/></svg><i class="cmdgrip"></i></div>
        <div class="cmdmain">
          <pre class="history">Command:
Loading .NET runtime v4.0.30319:</pre>
          <div class="cmdline">Command: <em>输入命令</em></div>
        </div>
      </div>
    </div>

    <aside class="vbar vbar-right">
      <svg class="ico"><use href="#r1"/></svg><svg class="ico"><use href="#r2"/></svg><svg class="ico"><use href="#r3"/></svg>
      <i class="vsep vsep-sm"></i>
      <svg class="ico"><use href="#r4"/></svg>
      <i class="vsep"></i>
      <svg class="ico"><use href="#r5"/></svg><svg class="ico"><use href="#r6"/></svg><svg class="ico"><use href="#r7"/></svg>
      <i class="vsep"></i>
      <svg class="ico"><use href="#r8"/></svg><svg class="ico"><use href="#r9"/></svg><svg class="ico"><use href="#r10"/></svg>
      <i class="vsep"></i>
      <svg class="ico"><use href="#r11"/></svg>
      <i class="hgrip hgrip-tall"></i>
      <svg class="ico"><use href="#r12"/></svg><svg class="ico"><use href="#r13"/></svg><svg class="ico"><use href="#r14"/></svg><svg class="ico"><use href="#r15"/></svg><svg class="ico"><use href="#r16"/></svg><svg class="ico"><use href="#r17"/></svg><svg class="ico"><use href="#r18"/></svg>
    </aside>

    <aside class="props">
      <div class="props-top"><i class="hgrip"></i><svg class="props-x" viewBox="0 0 10 10"><path d="M1 1l8 8M9 1L1 9"/></svg></div>
      <div class="props-head">
        <div class="combo combo-sel">未选取<svg class="chev" viewBox="0 0 12 8"><path d="M1 1l5 5 5-5"/></svg></div>
        <svg class="ico"><use href="#filter"/></svg>
        <svg class="ico on"><use href="#eye"/></svg>
      </div>
      <div class="props-body">
        <div class="ptable">
          <div class="pgroup"><i class="tog"><svg viewBox="0 0 11 11"><path d="M2 5.500h7"/></svg></i><b>常规</b></div>
          <div class="prow"><span class="pname">颜色</span><span class="pval"><i class="swatch"></i>依图层(BL)</span></div>
          <div class="prow"><span class="pname">图层</span><span class="pval">0</span></div>
          <div class="prow"><span class="pname">线型</span><span class="pval"><i class="ln ln-prop"></i>依图层(BL)</span></div>
          <div class="prow"><span class="pname">线型比例</span><span class="pval">1</span></div>
          <div class="prow"><span class="pname">线宽</span><span class="pval"><i class="ln ln-prop ln-bold"></i>依图层(BL)</span></div>
          <div class="prow"><span class="pname">透明度</span><span class="pval">依图层(BL)</span></div>
          <div class="prow"><span class="pname">标高</span><span class="pval">0</span></div>
          <div class="pgroup"><i class="tog"><svg viewBox="0 0 11 11"><path d="M2 5.500h7"/></svg></i><b>视图</b></div>
          <div class="prow"><i class="tog"><svg viewBox="0 0 11 11"><path d="M2 5.500h7M5.500 2v7"/></svg></i><span class="pname">相机</span><span class="pval">0, 0, 1</span></div>
          <div class="prow"><i class="tog"><svg viewBox="0 0 11 11"><path d="M2 5.500h7M5.500 2v7"/></svg></i><span class="pname">目标</span><span class="pval">0, 0, 0</span></div>
          <div class="prow"><span class="pname">透视</span><span class="pval">关闭</span></div>
          <div class="prow"><span class="pname">镜头长度</span><span class="pval">50 mm</span></div>
          <div class="prow"><span class="pname">视角</span><span class="pval">38.58</span></div>
          <div class="prow"><span class="pname">高度</span><span class="pval pval-off">210</span></div>
          <div class="prow"><span class="pname">宽度</span><span class="pval pval-off">817.38</span></div>
          <div class="prow prow-cut"><span class="pname">裁剪</span><span class="pval">关闭</span></div>
        </div>
        <div class="scroll">
          <div class="scroll-up"><svg viewBox="0 0 12 8"><path d="M1 7l5-5 5 5"/></svg></div>
          <div class="scroll-thumb"></div>
          <div class="scroll-down"><svg viewBox="0 0 12 8"><path d="M1 1l5 5 5-5"/></svg></div>
        </div>
      </div>
    </aside>
  </main>

  <footer class="status">
    <span class="st-ready">就绪</span>
    <span class="st-coords">493.31, 8.9, 0</span>
    <span class="st st-first">PC_TEXTSTYLE</span><span class="st">TH_GBDIM</span><span class="st">制图</span><span class="st off lat st-snap">SNAP</span><span class="st off lat st-grid">GRID</span><span class="st off">正交</span><span class="st lit">极坐标</span><span class="st lit">对象捕捉</span><span class="st lit">追踪</span><span class="st off">线宽</span><span class="st">模型</span><span class="st lat">1:1</span><span class="st lit lat">DUCS</span><span class="st lit lat">DYN</span><span class="st lit">导航</span><span class="st lit">候选物</span><span class="st lit lat">HKA</span><span class="st off lat">LOCKUI</span><span class="st">无</span>
    <i class="st-blue"></i><i class="caret st-caret"></i><i class="st-dots"></i>
  </footer>
  <div class="baseline"></div>

  <div class="watermark"><b>机械村</b><span>.jixiecun.com</span></div>
</body>
</html>
```

FILE: styles.css
```css
* {
  box-sizing: border-box;
  margin: 0;
  padding: 0;
}

html, body {
  width: 1425px;
  height: 742px;
  overflow: hidden;
}

body {
  position: relative;
  background-color: #2b2e34;
  color: #e6e6e6;
  font-family: "Noto Sans", "Noto Sans CJK SC", sans-serif;
  font-size: 15px;
}

.sprite {
  position: absolute;
  width: 0;
  height: 0;
}

i, em {
  font-style: normal;
}

/* icon colours, used inside the symbols */
.ico, .mini, .bigico, .toolico {
  fill: none;
  stroke: #e2e2e2;
  stroke-width: 1.100;
  flex: none;
  display: block;
}
.b { stroke: #4a8fdc; }
.bd { stroke: #2b2e34; }
.y { stroke: #f2c230; }
.o { stroke: #e0a92c; }
.r { stroke: #e2553a; }
.g { stroke: #2f9e63; }
.g2 { stroke: #39b54a; }
.gr { stroke: #9a9a9a; }
.lg { stroke: #e8b0a8; }
.wht { stroke: #fff; }
.dim { stroke: #8a8a8a; }
.fb { fill: #3f86dc; stroke: none; }
.fbl { fill: #2f8de4; stroke: none; }
.fbd { fill: #1f3c5c; stroke: none; }
.fy { fill: #f2c230; stroke: none; }
.fo { fill: #f0a030; stroke: none; }
.fr { fill: #e2553a; stroke: none; }
.fw { fill: #e8e8e8; stroke: none; }
.fd { fill: #2b2e34; stroke: none; }
.fgr { fill: #8f8f8f; stroke: none; }
.fgl { fill: #bcc6cf; stroke: none; }
.fgd { fill: #55585e; stroke: none; }
.fgn { fill: #245a2c; stroke: none; }
.fp { fill: #f0b0b0; stroke: none; }
.ftan { fill: #cbaa62; stroke: none; }
.thick { stroke-width: 2.400; }
.icotext {
  fill: #fff;
  stroke: none;
  font-family: "Liberation Sans", sans-serif;
  font-weight: bold;
}

/* title + menu */
.titlebar {
  height: 35px;
  background-color: #fff;
  border-top: 1px solid #333;
  display: flex;
  align-items: center;
  padding-left: 10px;
  color: #222;
}

.app-logo {
  width: 20px;
  height: 20px;
  flex: none;
}

.title {
  margin-left: 5px;
  font-size: 15.500px;
  padding-bottom: 2px;
}

.winctl {
  margin-left: auto;
  margin-right: 3px;
  display: flex;
}

.winctl svg {
  width: 58px;
  height: 24px;
}

.menubar {
  height: 28px;
  background-color: #fff;
  color: #222;
  display: flex;
  align-items: center;
  padding-left: 10px;
}

.doc-logo {
  width: 16px;
  height: 20px;
  margin-right: 9px;
}

.menubar span {
  margin-right: 15.300px;
  padding-bottom: 2px;
  white-space: nowrap;
}

.mdi {
  margin-left: auto;
  margin-right: 3px;
  display: flex;
  align-self: flex-end;
}

.mdi svg {
  width: 23px;
  height: 23px;
  border: 1px solid #ddd;
  margin-left: 1px;
}

/* toolbars */
.tb {
  display: flex;
  align-items: center;
  overflow: hidden;
  background-color: #2b2e34;
}

.tb-one {
  height: 31px;
}

.tb-two {
  height: 33px;
  padding-top: 1px;
}

.ico {
  width: 19px;
  height: 19px;
  padding: 2px;
  box-sizing: content-box;
}

.on {
  background-color: #2c4a68;
}

.sep {
  width: 1px;
  height: 22px;
  margin: 0 4px 0 3px;
  background-color: #55585e;
  flex: none;
}

.sep-last {
  margin-right: 2px;
  margin-left: 4px;
}

.grip {
  width: 3px;
  height: 20px;
  margin: 0 6px 0 9px;
  flex: none;
  background: repeating-linear-gradient(#e0e0e0 0 3px, transparent 3px 5px);
}

.grip-a {
  margin: 0 10px 0 15px;
}

.grip-b {
  margin: 0 6.500px 0 18px;
}

.grip-c {
  margin: 0 6.500px 0 11px;
}

.combo {
  background-color: #43464c;
  height: 24px;
  display: flex;
  align-items: center;
  flex: none;
  white-space: nowrap;
  padding-bottom: 1px;
}

.chev {
  width: 11px;
  height: 7px;
  margin-left: auto;
  margin-right: 2px;
  margin-top: 1px;
  fill: none;
  stroke: #ddd;
  stroke-width: 1.200;
  flex: none;
}

.combo-style {
  width: 155px;
  padding: 0 5px 2px 4px;
}

.combo-layer {
  width: 300px;
  margin: 0 3px 0 4px;
  padding-right: 3px;
}

.combo-color {
  width: 178px;
  margin: 0 7px 0 2px;
  padding: 0 4px 1px 7px;
}

.combo-color span {
  margin-left: 8px;
}

.combo-line {
  width: 177px;
  margin-right: 7px;
  padding: 0 3px 1px 6px;
}

.combo-line span {
  margin-left: 6px;
}

.combo small {
  font-size: 12px;
}

.mini {
  width: 18px;
  height: 18px;
  padding: 1px;
}

.swatch {
  width: 19px;
  height: 19px;
  background-color: #fff;
  border: 1px solid #111;
  flex: none;
  display: inline-block;
}

.combo-layer .swatch, .combo-rib .swatch {
  margin-left: 4px;
}

.combo-num {
  margin-left: 6px;
  font-size: 12px;
}

.ln {
  width: 80px;
  height: 1px;
  background-color: #e8e8e8;
  flex: none;
  display: inline-block;
}

.ln-bold {
  height: 2px;
}

.slider {
  width: 75px;
  height: 24px;
  margin: 0 5px 0 3.500px;
  background-color: #43464c;
  flex: none;
  display: flex;
  align-items: center;
  padding-left: 8px;
}

.slider-thumb {
  width: 11px;
  height: 18px;
  background-color: #2f7fd8;
  border-radius: 3px 3px 6px 6px;
}

.slider-track {
  width: 47px;
  height: 5px;
  background-color: #e4e4e4;
}

/* ribbon */
.rtabs {
  height: 31px;
  background-color: #1b1d21;
  display: flex;
  align-items: center;
  padding-left: 12px;
  font-size: 16px;
}

.rlogo {
  width: 31px;
  height: 31px;
}

.rtab {
  width: 99px;
  height: 31px;
  line-height: 30px;
  text-align: center;
}

.rtab-on {
  width: 94px;
  background-color: #2b2e34;
}

.rtab-first {
  margin-left: 3px;
}

.ribbon {
  height: 97px;
  display: flex;
  background-color: #2b2e34;
}

.panel {
  display: flex;
  flex-direction: column;
  border-right: 1px solid #44474d;
  flex: none;
}

.panel h3 {
  font-size: 15px;
  text-align: center;
  font-weight: bold;
  height: 26px;
  line-height: 26px;
}

.pbody {
  display: flex;
  height: 71px;
}

.p-draw { width: 273px; padding-left: 15px; }
.p-mod { width: 295px; }
.p-note { width: 153px; }
.p-layer { width: 283px; }

.big {
  display: flex;
  flex-direction: column;
  align-items: center;
  flex: none;
  line-height: 19px;
  white-space: nowrap;
}

.w47 { width: 47px; }
.w72 { width: 72px; }
.w74 { width: 74px; }
.w36 { width: 36px; flex: none; }
.w56 { width: 56px; }
.w63 { width: 63px; flex: none; }
.w22 { width: 22px; flex: none; }
.w51 { width: 51px; }
.w83 { width: 83px; }

.bigico {
  width: 32px;
  height: 32px;
  margin: 5px 0 0;
}

.big span {
  height: 19px;
}

.caret {
  width: 0;
  height: 0;
  flex: none;
  border-left: 4px solid transparent;
  border-right: 4px solid transparent;
  border-top: 4px solid #eee;
}

.big .caret {
  margin-top: 7px;
}

.smalls {
  display: flex;
  flex-direction: column;
  padding-top: 3px;
  flex: none;
}

.col-two {
  padding-left: 1px;
}

.sm {
  height: 22px;
  display: flex;
  align-items: center;
  white-space: nowrap;
  padding-bottom: 1px;
}

.sm .ico {
  width: 16px;
  height: 16px;
  padding: 1px;
}

.smalls .ico {
  margin-right: 2px;
}

.sm-caret .caret {
  margin-left: 0;
  margin-right: 7px;
}

.p-draw .smalls:first-of-type {
  margin-left: 2px;
}

.p-note .smalls {
  margin-left: 8px;
}

.layer-rows {
  width: 217px;
  flex: none;
  margin-left: -4px;
  display: flex;
  flex-direction: column;
  padding-top: 4px;
}

.layer-row {
  display: flex;
  align-items: center;
  height: 23px;
}

.layer-row .ico {
  width: 16px;
  height: 16px;
  padding: 0;
  margin-right: 4px;
}

.layer-tools {
  height: 22px;
}

.layer-tools .ico {
  margin-right: 7.600px;
}

.layer-tools .caret {
  margin-left: -2px;
}

.combo-rib {
  height: 23px;
  flex: 1;
  min-width: 0;
  padding-right: 3px;
}

.tool {
  align-items: center;
  padding-top: 18px;
  line-height: 18px;
}

.tool b {
  font-size: 15px;
  margin-top: 6px;
  white-space: nowrap;
}

.tool .caret {
  margin-top: 3px;
}

.toolico {
  width: 32px;
  height: 32px;
  outline: 1px solid #3d4046;
}

.tool-last {
  border-right: 0;
}

/* workspace */
.work {
  display: flex;
  height: 462px;
  overflow: hidden;
}

.vbar {
  display: flex;
  flex-direction: column;
  align-items: center;
  flex: none;
  overflow: hidden;
}

.vbar .ico {
  width: 18px;
  height: 18px;
}

.vbar-left {
  width: 29px;
}

.vbar-right {
  width: 28px;
  padding-top: 19px;
  border-right: 1px solid #1f2125;
}

.hgrip {
  display: block;
  width: 18px;
  height: 18px;
  flex: none;
  background: repeating-linear-gradient(90deg, #e0e0e0 0 2px, transparent 2px 4px) center / 18px 3px no-repeat;
}

.hgrip-tall {
  height: 22px;
}

.vsep {
  width: 20px;
  height: 1px;
  margin: 3.500px 0;
  background-color: #55585e;
  flex: none;
}

.vsep-sm {
  margin: 2px 0;
}

.center {
  width: 951px;
  flex: none;
  display: flex;
  flex-direction: column;
}

.doctabs {
  height: 22px;
  display: flex;
  flex: none;
  margin-left: 1px;
  font-size: 14px;
}

.doctab {
  width: 98px;
  display: flex;
  align-items: center;
  padding-left: 15px;
  background-color: #303339;
}

.doctab svg {
  width: 13px;
  height: 13px;
  margin-left: auto;
  margin-right: 9px;
  fill: none;
  stroke: #ddd;
  stroke-width: 1.500;
}

.docadd {
  width: 30px;
  background-color: #1b1d21;
  display: flex;
  align-items: center;
  justify-content: center;
}

.docadd svg {
  width: 13px;
  height: 13px;
  stroke: #eee;
  stroke-width: 1.200;
}

.viewframe {
  height: 258px;
  border: 1px solid #5a5d63;
  display: flex;
  flex-direction: column;
  flex: none;
}

.canvas {
  height: 236px;
  background-color: #17191e;
  position: relative;
  flex: none;
}

.navwheel {
  position: absolute;
  left: 861px;
  top: 11px;
  width: 77px;
  height: 77px;
  border-radius: 50%;
  background-color: #808080;
}

.tri {
  position: absolute;
  width: 0;
  height: 0;
  border: 3px solid transparent;
  border-bottom: 5px solid #4e4e4e;
  left: 35px;
  top: 34px;
}

.t1 { transform: rotate(180deg) translateY(32px); }
.t2 { transform: rotate(225deg) translateY(32px); }
.t3 { transform: rotate(270deg) translateY(32px); }
.t4 { transform: rotate(315deg) translateY(32px); }
.t5 { transform: rotate(0deg) translateY(32px); }
.t6 { transform: rotate(45deg) translateY(32px); }
.t7 { transform: rotate(90deg) translateY(32px); }
.t8 { transform: rotate(135deg) translateY(32px); }

.ucs {
  position: absolute;
  left: 24px;
  top: 177px;
  width: 40px;
  height: 34px;
}

.ucs-y {
  fill: #2f9e63;
  font-size: 8px;
  font-family: "Liberation Sans", sans-serif;
}

.ucs-x {
  fill: #c06060;
  font-size: 8px;
  font-family: "Liberation Sans", sans-serif;
}

.crosshair {
  position: absolute;
  left: 831px;
  top: 195px;
  width: 64px;
  height: 41px;
}

.ch-h {
  position: absolute;
  left: 0;
  right: 0;
  top: 31px;
  height: 1px;
  background-color: #c8a0a0;
}

.ch-v {
  position: absolute;
  left: 31px;
  top: 0;
  bottom: 0;
  width: 1px;
  background-color: #22b070;
}

.ch-box {
  position: absolute;
  left: 26px;
  top: 26px;
  width: 11px;
  height: 11px;
  border: 1px solid #fff;
}

.layouttabs {
  height: 20px;
  background-color: #33363c;
  display: flex;
  align-items: center;
  flex: none;
  font-size: 14px;
}

.navbtn {
  width: 20px;
  height: 20px;
  margin-left: 1px;
  background: none;
  border: 0;
  border-left: 1px solid #6a6d72;
  border-top: 1px solid #6a6d72;
  display: flex;
  align-items: center;
  justify-content: center;
  flex: none;
}

.navbtn svg {
  width: 12px;
  height: 14px;
}

.ltab {
  height: 20px;
  line-height: 20px;
  padding: 0 6.500px;
  background-color: #26282d;
  border-right: 1px solid #3a3d43;
}

.ltab-on {
  font-weight: bold;
  font-size: 15px;
  background-color: #2b2e34;
  padding: 0 4px 0 4px;
}

.ltab-add {
  border-right: 0;
  font-size: 15px;
  padding: 0 4px;
}

.cmdwrap {
  flex: 1;
  display: flex;
  margin: 3px 1px 0 0;
  min-height: 0;
}

.cmdside {
  width: 12px;
  flex: none;
  position: relative;
}

.cmdx {
  position: absolute;
  left: 1px;
  top: 5px;
  width: 9px;
  height: 9px;
  stroke: #bbb;
  stroke-width: 2;
}

.cmdgrip {
  position: absolute;
  left: 3px;
  top: 69px;
  width: 3px;
  height: 20px;
  background: repeating-linear-gradient(#e0e0e0 0 2px, transparent 2px 4px);
}

.cmdmain {
  flex: 1;
  display: flex;
  flex-direction: column;
}

.history {
  height: 152px;
  background-color: #808080;
  color: #f4f4f4;
  font-family: "Liberation Mono", monospace;
  font-size: 15px;
  line-height: 20px;
  padding: 38px 0 0 6px;
  flex: none;
}

.cmdline {
  height: 27px;
  line-height: 17px;
  padding-left: 1px;
  font-family: "Liberation Mono", monospace;
  font-size: 15px;
  white-space: nowrap;
}

.cmdline em {
  font-family: "Noto Sans CJK SC", sans-serif;
  font-size: 18px;
  font-style: italic;
  color: #808080;
}

/* properties */
.props {
  flex: 1;
  display: flex;
  flex-direction: column;
  min-width: 0;
  overflow: hidden;
}

.props-top {
  height: 15px;
  display: flex;
  align-items: flex-start;
  justify-content: center;
  position: relative;
  flex: none;
}

.props-top .hgrip {
  height: 10px;
  margin-right: 8px;
}

.props-x {
  position: absolute;
  right: 4px;
  top: 2px;
  width: 9px;
  height: 9px;
  stroke: #bbb;
  stroke-width: 2;
}

.props-head {
  height: 25px;
  margin: 0 0 6px 9px;
  display: flex;
  align-items: center;
  flex: none;
}

.combo-sel {
  width: 359px;
  height: 25px;
  padding: 0 4px 1px 3px;
  margin-right: 2px;
}

.props-head .ico {
  width: 18px;
  height: 18px;
  padding: 2px;
}

.props-head .on {
  margin-left: 1px;
}

.props-body {
  display: flex;
  flex: 1;
  min-height: 0;
}

.ptable {
  width: 397px;
  flex: none;
}

.pgroup, .prow {
  height: 25px;
  display: flex;
  align-items: center;
  position: relative;
  padding-left: 23px;
}

.prow-cut {
  overflow: hidden;
}

.pgroup b {
  flex: 1;
  height: 25px;
  line-height: 23px;
  padding-left: 5px;
  background-color: #43464c;
}

.tog {
  position: absolute;
  left: 9px;
  top: 7px;
  width: 11px;
  height: 11px;
  background-color: #d8dbe0;
  display: block;
}

.tog svg {
  display: block;
  width: 11px;
  height: 11px;
  stroke: #333;
  stroke-width: 1.400;
}

.pname {
  width: 109px;
  height: 25px;
  line-height: 23px;
  padding-left: 5px;
  border-right: 1px solid #44474d;
  border-bottom: 1px solid #44474d;
  flex: none;
}

.pval {
  flex: 1;
  height: 25px;
  padding-left: 5px;
  padding-bottom: 2px;
  border-bottom: 1px solid #44474d;
  display: flex;
  align-items: center;
  white-space: nowrap;
}

.pval .swatch {
  margin: 1px 8px 0 1px;
}

.ln-prop {
  width: 132px;
  margin: 2px 6px 0 2px;
}

.pval-off {
  color: #7a7a7a;
}

.scroll {
  width: 20px;
  flex: none;
  background-color: #f0f0f0;
  display: flex;
  flex-direction: column;
  position: relative;
}

.scroll-up {
  height: 24px;
  display: flex;
  align-items: center;
  justify-content: center;
}

.scroll svg {
  width: 11px;
  height: 7px;
  fill: none;
  stroke: #444;
  stroke-width: 1.500;
}

.scroll-thumb {
  height: 258px;
  background-color: #cdcdcd;
}

.scroll-down {
  margin-top: auto;
  height: 18px;
  display: flex;
  align-items: flex-start;
  justify-content: center;
}

/* status */
.status {
  height: 21px;
  background-color: #1c1e22;
  display: flex;
  align-items: center;
  overflow: hidden;
  white-space: nowrap;
}

.st-ready {
  width: 240px;
  flex: none;
  padding-left: 5px;
  border-right: 1px solid #aaa;
  height: 19px;
  line-height: 17px;
}

.st-coords {
  width: 168px;
  flex: none;
  text-align: right;
  word-spacing: 2px;
  line-height: 17px;
}

.st {
  height: 19px;
  line-height: 17px;
  padding: 0 1px;
  margin-left: 6.500px;
  position: relative;
  flex: none;
}

.st-first {
  margin-left: 6px;
  font-size: 15.500px;
}

.st-snap {
  margin-left: 8px;
}

.st-grid {
  margin-left: 10px;
}

.st::before {
  content: "";
  position: absolute;
  left: -4px;
  top: 0;
  bottom: 0;
  width: 1px;
  background-color: #aaa;
}

.lat {
  font-size: 14px;
}

.off {
  color: #6e6e6e;
}

.lit {
  background-color: #3f4247;
}

.st-blue {
  width: 10px;
  height: 14px;
  margin-left: 3px;
  background-color: #1d3f9a;
  flex: none;
}

.st-caret {
  margin-left: auto;
  margin-top: 10px;
}

.st-dots {
  width: 8px;
  height: 10px;
  margin: 8px 3px 0 9px;
  flex: none;
  background: repeating-linear-gradient(90deg, #e0e0e0 0 3px, transparent 3px 5px);
}

.baseline {
  height: 4px;
  background: linear-gradient(90deg, #0c0c0c 0 990px, #2c3a12 990px 1020px, #7d9a2a 1020px 1100px, #1f2a10 1100px 1230px, #0c0c0c 1230px);
}

.watermark {
  position: absolute;
  right: 0;
  top: 697px;
  width: 105px;
  color: rgba(150, 150, 150, 0.75);
  text-align: center;
  pointer-events: none;
}

.watermark b {
  display: block;
  font-size: 32px;
  line-height: 36px;
  letter-spacing: 2px;
  white-space: nowrap;
}

.watermark span {
  display: block;
  font-size: 10px;
  line-height: 9px;
  letter-spacing: 1px;
  white-space: nowrap;
  font-weight: bold;
}
```
